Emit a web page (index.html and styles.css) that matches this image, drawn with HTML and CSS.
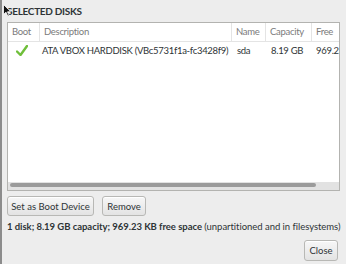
FILE: index.html
```html
<!DOCTYPE html>
<html>
<head>
<meta charset="utf-8">
<link rel="stylesheet" href="styles.css">
</head>
<body>
<div class="win">
  <h1 class="title">SELECTED DISKS</h1>
  <div class="table">
    <div class="grid thead">
      <div class="th c-boot">Boot</div>
      <div class="th">Description</div>
      <div class="th">Name</div>
      <div class="th">Capacity</div>
      <div class="th last">Free</div>
    </div>
    <div class="grid row">
      <div class="td c-boot">
        <svg class="check" width="12" height="11" viewBox="0 0 12 11"><path d="M1 6.5 L4.5 10 L11 1" fill="none" stroke="#6fbf3a" stroke-width="2.4" stroke-linecap="round" stroke-linejoin="round"/></svg>
      </div>
      <div class="td desc">ATA VBOX HARDDISK (VBc5731f1a-fc3428f9)</div>
      <div class="td">sda</div>
      <div class="td">8.19 GB</div>
      <div class="td free">969.23 KB</div>
    </div>
    <div class="fill"></div>
    <div class="hscroll"><div class="thumb"></div></div>
  </div>
  <div class="buttons">
    <button class="btn boot">Set as Boot Device</button>
    <button class="btn remove">Remove</button>
  </div>
  <p class="summary"><b>1 disk; 8.19 GB capacity; 969.23 KB free space</b> (unpartitioned and in filesystems)</p>
  <div class="footer"><button class="btn close">Close</button></div>
</div>
<svg class="cursor" width="8" height="13" viewBox="0 0 8 13"><path d="M0.5 0.5 L0.5 10.5 L3 8.2 L4.8 12.2 L6.2 11.6 L4.5 7.8 L7.5 7.6 Z" fill="#111" stroke="#fff" stroke-width="0.8"/></svg>
</body>
</html>
```

FILE: styles.css
```css
html, body {
  margin: 0;
  padding: 0;
}
body {
  width: 346px;
  height: 264px;
  overflow: hidden;
  background: #ededed;
  font-family: "Lato", "DejaVu Sans", sans-serif;
  font-size: 9.5px;
  color: #2e3436;
  position: relative;
}
.win {
  height: 264px;
  box-sizing: border-box;
  border-left: 2px solid #8c8c8c;
  padding: 0 6px 0 5px;
  display: flex;
  flex-direction: column;
}
.title {
  margin: 0;
  height: 22px;
  line-height: 22px;
  font-size: 10px;
  letter-spacing: -0.3px;
  font-weight: bold;
  color: #2e3436;
  white-space: nowrap;
}
.table {
  height: 169px;
  box-sizing: border-box;
  border: 1px solid #b3b3b0;
  background: #fff;
  display: flex;
  flex-direction: column;
  overflow: hidden;
}
.grid {
  display: grid;
  grid-template-columns: 32px 192px 34px 46px 60px;
  letter-spacing: -0.3px;
}
.thead {
  height: 18px;
  border-bottom: 1px solid #e4e4e4;
}
.th {
  color: #7b7b7b;
  line-height: 18px;
  padding-left: 4px;
  border-right: 1px solid #e4e4e4;
  white-space: nowrap;
}
.th.last { border-right: none; }
.row {
  height: 20px;
}
.td {
  line-height: 18px;
  padding-left: 5px;
  white-space: nowrap;
  color: #2e3436;
}
.td.desc { padding-left: 2px; }
.td.free { padding-left: 4px; }
.c-boot.td {
  display: flex;
  align-items: center;
  padding-left: 8px;
  height: 14px;
  padding-top: 1px;
}
.fill {
  flex: 1;
}
.hscroll {
  height: 7px;
  background: #e2e2e2;
  padding: 1px 0 0 2px;
}
.thumb {
  width: 306px;
  height: 4px;
  border-radius: 2px;
  background: #9b9b9b;
}
.buttons {
  display: flex;
  gap: 8px;
  margin-top: 5px;
}
.btn {
  font-family: inherit;
  font-size: 9.5px;
  color: #2e3436;
  height: 20px;
  padding: 0;
  white-space: nowrap;
  border: 1px solid #b8b8b5;
  border-radius: 3px;
  background: linear-gradient(#f7f7f7, #e3e3e3);
  box-shadow: inset 0 1px #fff;
}
.boot { width: 87px; }
.remove { width: 44px; }
.summary {
  margin: 4px 0 0 0;
  line-height: 14px;
  letter-spacing: -0.04px;
  white-space: nowrap;
}
.footer {
  display: flex;
  justify-content: flex-end;
  margin-top: 6px;
  padding-right: 2px;
}
.close {
  width: 34px;
  height: 21px;
}
.cursor {
  position: absolute;
  left: 3px;
  top: 4px;
}
```
